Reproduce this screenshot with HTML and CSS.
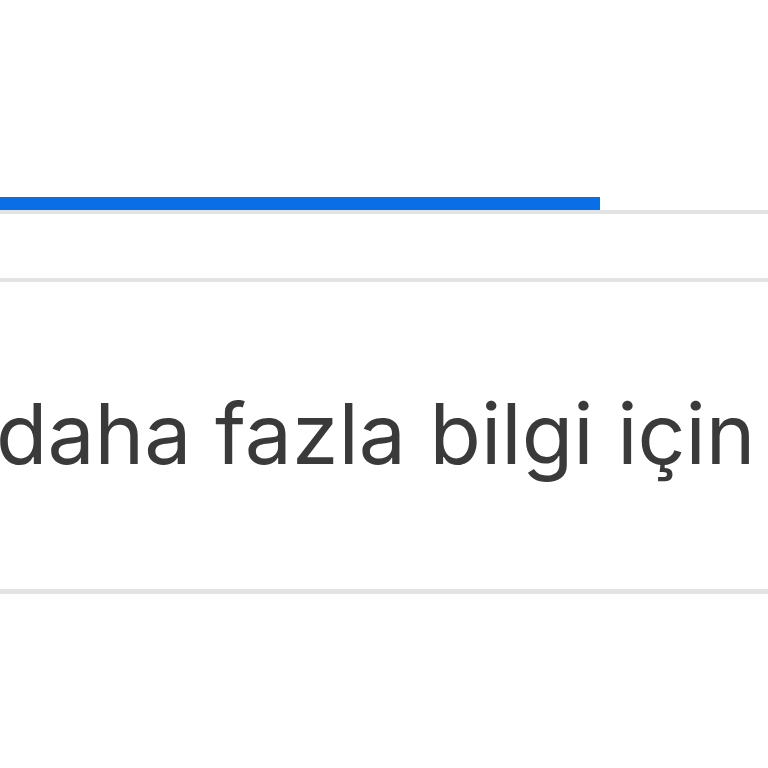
FILE: index.html
```html
<!DOCTYPE html>
<html>
<head>
<meta charset="utf-8">
<link rel="stylesheet" href="styles.css">
</head>
<body>
<div class="page">
  <div class="progress">
    <div class="progress-fill" style="width:600px"></div>
  </div>
  <div class="gap"></div>
  <div class="row">
    <span class="info">daha fazla bilgi için</span>
  </div>
</div>
</body>
</html>
```
FILE: styles.css
```css
html, body {
  margin: 0;
  padding: 0;
  background: #ffffff;
}
.page {
  width: 768px;
  height: 768px;
  overflow: hidden;
  padding-top: 197px;
  box-sizing: border-box;
}
.progress {
  border-bottom: 4px solid #e3e3e3;
  height: 13px;
}
.progress-fill {
  height: 13px;
  background: #0a6fe6;
}
.gap {
  height: 64px;
  border-bottom: 4px solid #e3e3e3;
}
.row {
  height: 312px;
  border-bottom: 5px solid #e3e3e3;
  box-sizing: border-box;
  padding-top: 102px;
}
.info {
  display: block;
  font-family: Inter, "Noto Sans", sans-serif;
  font-size: 84px;
  line-height: 100px;
  color: #3a3a3a;
  margin-left: -4px;
  white-space: nowrap;
}
```
